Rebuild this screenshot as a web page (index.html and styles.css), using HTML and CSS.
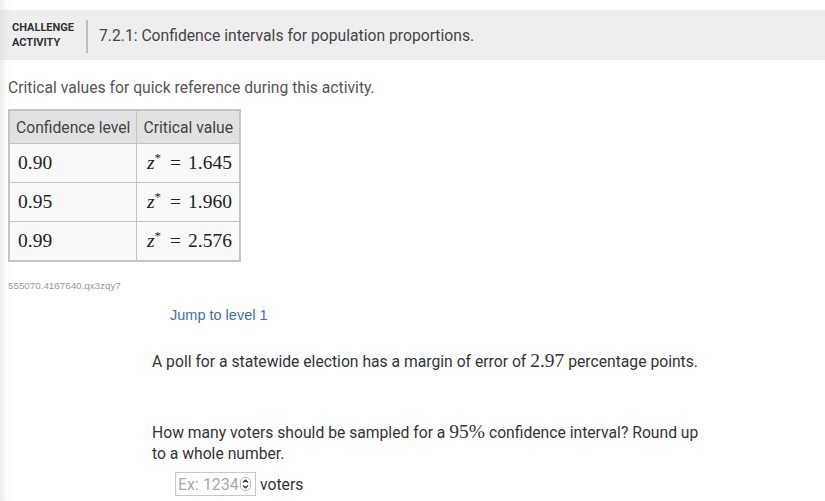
FILE: index.html
```html
<!DOCTYPE html>
<html>
<head>
<meta charset="utf-8">
<link rel="stylesheet" href="styles.css">
</head>
<body>
<div class="page">
  <header class="activity-header">
    <div class="label">CHALLENGE<br>ACTIVITY</div>
    <div class="sep"></div>
    <div class="title">7.2.1: Confidence intervals for population proportions.</div>
  </header>

  <p class="intro">Critical values for quick reference during this activity.</p>

  <table class="crit">
    <thead>
      <tr><th class="c1">Confidence level</th><th class="c2">Critical value</th></tr>
    </thead>
    <tbody>
      <tr><td class="math">0.90</td><td class="math"><i>z</i><sup>*</sup><span class="eq">=</span>1.645</td></tr>
      <tr><td class="math">0.95</td><td class="math"><i>z</i><sup>*</sup><span class="eq">=</span>1.960</td></tr>
      <tr><td class="math">0.99</td><td class="math"><i>z</i><sup>*</sup><span class="eq">=</span>2.576</td></tr>
    </tbody>
  </table>

  <div class="code">555070.4167640.qx3zqy7</div>

  <div class="jump">Jump to level 1</div>

  <div class="question">
    <p class="q1">A poll for a statewide election has a margin of error of <span class="m">2.97</span> percentage points.</p>
    <p class="q2">How many voters should be sampled for a <span class="m">95%</span> confidence interval? Round up to a whole number.</p>
    <div class="answer">
      <div class="input">
        <span class="ph">Ex: 1234</span>
        <svg class="spin" width="11" height="14" viewBox="0 0 11 14">
          <rect x="0.5" y="0.5" width="10" height="13" rx="4.5" fill="#fff" stroke="#b5b5b5"/>
          <path d="M3 5.5 L5.5 3.2 L8 5.5" fill="none" stroke="#333" stroke-width="1.3"/>
          <path d="M3 8.5 L5.5 10.8 L8 8.5" fill="none" stroke="#333" stroke-width="1.3"/>
        </svg>
      </div>
      <span class="unit">voters</span>
    </div>
  </div>
</div>
</body>
</html>
```

FILE: styles.css
```css
html, body {
  margin: 0;
  padding: 0;
  background: #fff;
}
body {
  font-family: Roboto, "Liberation Sans", sans-serif;
  color: #333;
  width: 825px;
  height: 501px;
  overflow: hidden;
}
.page {
  padding-top: 10px;
  height: 491px;
  background: linear-gradient(to right, #ececec 0px, #fafafa 6px, #fff 12px);
}
.activity-header {
  display: flex;
  align-items: center;
  height: 50px;
  background: linear-gradient(to right, #e2e2e2 0px, #ececec 8px, #eeeeee 14px);
}
.label {
  font-size: 11px;
  font-weight: 700;
  line-height: 15px;
  color: #333;
  padding-left: 12px;
  width: 64px;
}
.sep {
  width: 2px;
  height: 33px;
  background: #bdbdbd;
  margin: 2px 11px 0 10px;
}
.title {
  font-size: 15.7px;
  color: #444;
  padding-top: 1px;
}
.intro {
  margin: 18px 0 0 8px;
  font-size: 15.7px;
  line-height: 20px;
  color: #555;
}
.crit {
  margin: 11px 0 0 8px;
  border-collapse: collapse;
  border: 2px solid #c4c4c4;
}
.crit th {
  background: #e1e1e1;
  font-weight: 400;
  font-size: 15.7px;
  color: #444;
  height: 32px;
  padding: 0 6px;
  text-align: left;
  border: 1px solid #c4c4c4;
  white-space: nowrap;
}
.crit td {
  background: #f9f9f9;
  border: 1px solid #c4c4c4;
  height: 38px;
  padding: 0 8px;
}
.crit td.math {
  font-family: "Liberation Serif", "DejaVu Serif", serif;
  font-size: 19.5px;
  color: #222;
  white-space: nowrap;
}
.crit td + td.math { text-align: right; padding-right: 7px; }
.math i { font-style: italic; }
.math sup { font-size: 13px; vertical-align: 7px; line-height: 0; }
.eq { margin: 0 7px 0 9px; }
.code {
  margin: 18px 0 0 8px;
  font-family: "Liberation Sans", sans-serif;
  font-size: 9.8px;
  color: #9a9a9a;
}
.jump {
  margin: 16px 0 0 170px;
  font-family: "Liberation Sans", sans-serif;
  font-size: 14.5px;
  color: #3d6fa8;
}
.question {
  margin-left: 152px;
  width: 560px;
  font-size: 15.7px;
  line-height: 21px;
  color: #333;
}
.q1 {
  margin: 28px 0 0 0;
}
.q2 {
  margin: 50px 0 0 0;
}
.m {
  font-family: "Liberation Serif", "DejaVu Serif", serif;
  font-size: 19.5px;
  line-height: 1;
}
.answer {
  display: flex;
  align-items: center;
  margin: 8px 0 0 23px;
}
.input {
  display: flex;
  align-items: center;
  width: 77px;
  height: 22px;
  border: 1px solid #c8c8c8;
  padding: 0 0 0 2px;
}
.ph {
  font-size: 16px;
  color: #a9a9a9;
  flex: 1;
  white-space: nowrap;
}
.spin { margin-right: 4px; }
.unit {
  margin-left: 4px;
  font-size: 15.7px;
  color: #333;
}
```
